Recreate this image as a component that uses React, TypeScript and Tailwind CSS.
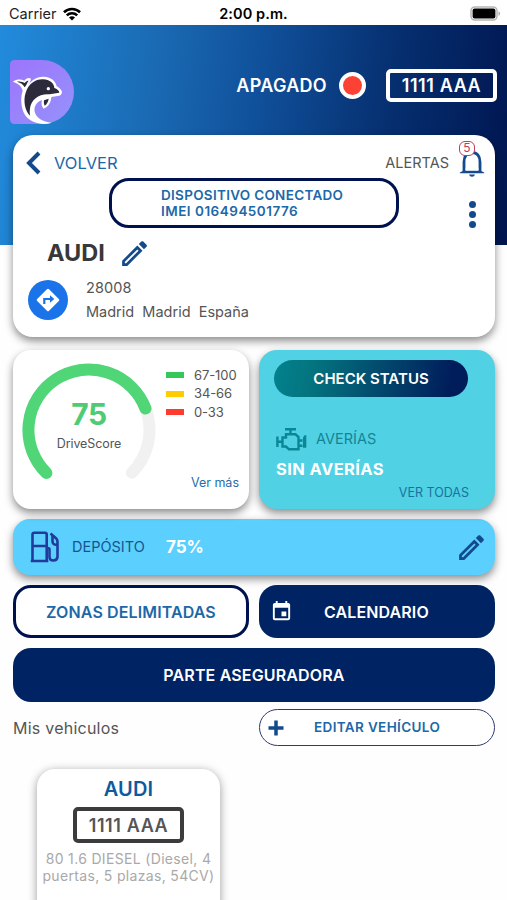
import React from "react";
import { MdOutlineEdit, MdEvent } from "react-icons/md";

function Wifi() {
  return (
    <svg width="18" height="14" viewBox="0 0 19 14" fill="none" stroke="#000" strokeWidth="2.700">
      <path d="M1 5.200C5.800.600 13.200.600 18 5.200" />
      <path d="M4 8.400c3.100-3 7.900-3 11 0" />
      <path d="M9.500 13.800 L6.300 10.600 C8.100 9 10.900 9 12.700 10.600 Z" fill="#000" stroke="none" />
    </svg>
  );
}

function Battery() {
  return (
    <svg width="31" height="15" viewBox="0 0 31 15">
      <rect x="1" y="1" width="26" height="13" rx="3.800" fill="#fff" stroke="#b5b5b1" strokeWidth="1.500" />
      <rect x="2.600" y="2.600" width="22.800" height="9.800" rx="2" fill="#000" />
      <path d="M28.500 5.200c2 .8 2 3.800 0 4.600z" fill="#a9a9a9" />
    </svg>
  );
}

function Logo() {
  return (
    <svg width="64" height="64" viewBox="17 15 192 192">
      <defs>
        <linearGradient id="violet" x1="0" y1="0" x2="1" y2="1">
          <stop offset="0" stopColor="#9d75fb" />
          <stop offset="1" stopColor="#9592fb" />
        </linearGradient>
      </defs>
      <path d="M31 15H113A96 96 0 0 1 113 207H31Q17 207 17 193V29Q17 15 31 15Z" fill="url(#violet)" />
      <path d="M26 80C40 70 52 74 60 77C66 68 74 67 80 71C79 80 74 86 71 92C82 75 97 64 118 65C142 66 154 79 157 94C164 98 172 104 173 111C172 119 168 123 160 123L141 126C140 142 133 155 118 161C110 153 111 143 113 135C98 140 88 154 91 170C96 188 114 201 143 203C113 213 77 203 62 180C49 160 48 128 55 107C51 91 40 86 26 80Z" fill="#fff" />
      <path d="M38 80C48 78 56 81 61 84C65 78 69 77 73 77C67 84 67 91 61 97C57 88 49 83 38 80Z" fill="#2c2b3b" />
      <path d="M77 182C62 168 56 137 64 113C73 87 91 73 115 73C138 74 149 85 150 99C158 102 165 107 165 113L136 118C105 115 80 134 77 160Q75 172 77 182Z" fill="#2c2b3b" />
      <path d="M119 136L133 131Q131 145 121 152Q117 145 119 136Z" fill="#2c2b3b" />
      <circle cx="132" cy="101" r="5" fill="#fff" />
    </svg>
  );
}

function Bell() {
  return (
    <svg width="26" height="28" viewBox="0 0 26 28">
      <path d="M5 23V13C5 7 8 3.500 13 3.500S21 7 21 13V23" fill="none" stroke="#124a8b" strokeWidth="2.800" />
      <path d="M.8 23.500Q4 22.500 5 20.500H21Q22 22.500 25.200 23.500V24.300H.8Z" fill="#124a8b" />
      <path d="M6.400 19.500H19.600V21.800H6.400Z" fill="#fff" />
      <path d="M10 25.600H16Q15.500 27.800 13 27.800T10 25.600Z" fill="#124a8b" />
    </svg>
  );
}

function Directions() {
  return (
    <svg width="40" height="40" viewBox="0 0 40 40">
      <circle cx="20" cy="20" r="20" fill="#1a73e8" />
      <rect x="11.600" y="11.600" width="16.800" height="16.800" rx="1.500" fill="#fff" transform="rotate(45 20 20)" />
      <path d="M16.300 24V19H23" fill="none" stroke="#1a73e8" strokeWidth="2.200" />
      <path d="M22 15.300L26.300 19L22 22.700Z" fill="#1a73e8" />
    </svg>
  );
}

function Gauge() {
  return (
    <svg width="134" height="134" viewBox="0 0 134 134" fill="none" strokeWidth="12" strokeLinecap="round">
      <path d="M123.500 45.500A60.500 60.500 0 0 1 109.800 109.800" stroke="#f1f1f1" />
      <path d="M24.400 110A60.500 60.500 0 1 1 123.500 45.500" stroke="#50d577" />
    </svg>
  );
}

function Engine() {
  return (
    <svg width="31" height="24" viewBox="0 0 31 24" fill="none" stroke="#0a8796" strokeWidth="2.400">
      <path d="M9 2.200H20M14.500 2.200V7" />
      <path d="M1.400 9.500V20M1.400 14.700H6" />
      <path d="M10 7.300H19.500L22.500 10V22.300H13L10 19.500H6.500V10.500H10Z" />
      <path d="M22.500 13.500H26.500M22.500 18.800H26.500" />
      <path d="M27 10.500V20.800H30.300V8.200H28.500Z" fill="#0a8796" stroke="none" />
    </svg>
  );
}

function Fuel() {
  return (
    <svg width="29" height="32" viewBox="0 0 29 32" fill="none" stroke="#213a9b" strokeWidth="2.600" strokeLinejoin="round">
      <path d="M2.500 30V3.500Q2.500 1.800 4.200 1.800H15Q16.700 1.800 16.700 3.500V30" />
      <path d="M.8 30H18.300M2.500 15H16.700" />
      <path d="M16.700 17H17.500Q19.500 17 19.500 18.500V26Q19.500 29.500 23.300 29.500T27.500 26V10.500Q27.500 8.500 26 7.200L20.500 2.500" />
      <path d="M22.500 4.800V10.500Q23 14.500 27.500 13.500" />
    </svg>
  );
}

const ranges = [
  { label: "67-100", color: "bg-[#34c759]" },
  { label: "34-66", color: "bg-[#ffcc00]" },
  { label: "0-33", color: "bg-[#ff3b30]" },
];

export default function App() {
  return (
    <div className="h-[900px] w-[507px] overflow-hidden bg-[#fefefe] font-['Inter','Liberation_Sans',sans-serif] leading-none text-[#555]">
      <div className="grid h-[25px] grid-cols-3 items-center bg-white pt-[2px] text-[14.5px] text-black">
        <div className="flex items-center gap-[6px] pl-[9px]">
          <span className="pt-[1px] text-[#222]">Carrier</span>
          <Wifi />
        </div>
        <span className="pt-[1px] text-center font-semibold tracking-[0.1px]">2:00 p.m.</span>
        <div className="flex justify-end pr-[6px]"><Battery /></div>
      </div>

      <div className="bg-[linear-gradient(97deg,#228bdc_0%,#1a6ab3_30%,#10509a_50%,#062f70_75%,#001550_100%)] bg-[length:100%_220px] bg-no-repeat pl-[13px] pr-[12px]">
        <header className="-ml-[3px] -mr-[2px] flex h-[110px] items-center pt-[11px]">
          <div className="mt-[12px]"><Logo /></div>
          <span className="ml-auto pt-[1px] text-[18px] font-semibold tracking-[0.3px] text-white">APAGADO</span>
          <div className="ml-[12px] size-[27px] rounded-full border-[4px] border-white bg-[#fb4234]" />
          <div className="ml-[20px] flex h-[33px] w-[111px] items-center justify-center rounded-[5px] border-[4px] border-white pt-[1px] text-[18px] font-semibold tracking-[0.6px] text-white">1111 AAA</div>
        </header>

        <section className="h-[202px] rounded-[20px] bg-white shadow-[0_4px_9px_rgba(0,0,0,0.45)]">
          <div className="flex h-[43px] items-center pl-[13px] pr-[10px] pt-[12px]">
            <svg width="15" height="24" viewBox="0 0 15 24" fill="none" stroke="#124a8b" strokeWidth="4"><path d="M13 2L3 12L13 22" /></svg>
            <span className="ml-[13px] pt-[1px] text-[16.5px] text-[#1d66a8]">VOLVER</span>
            <span className="ml-auto pt-[1px] text-[14.5px]">ALERTAS</span>
            <div className="relative ml-[10px] flex">
              <Bell />
              <span className="absolute -top-[8px] left-0 flex h-[15px] w-[16px] items-center justify-center rounded-[6px] border border-[#c43b60] bg-white text-[12px] text-[#c43b60]">5</span>
            </div>
          </div>
          <div className="flex items-start pl-[96px]">
            <div className="h-[50px] w-[290px] rounded-[20px] border-[3px] border-[#00114f] pl-[49px] pt-[6px] text-[13.5px] font-semibold leading-[16px] tracking-[0.3px] text-[#1d68a8]">
              DISPOSITIVO CONECTADO<br /><span className="tracking-[0.5px]">IMEI 016494501776</span>
            </div>
            <div className="ml-[70px] mt-[23px] flex flex-col gap-[3px]">
              {[0, 1, 2].map((i) => <i key={i} className="size-[7px] rounded-full bg-[#124a8b]" />)}
            </div>
          </div>
          <div className="mt-[8px] flex h-[34px] items-center pl-[34px]">
            <span className="w-[71px] text-[23.5px] font-bold text-[#383838]">AUDI</span>
            <MdOutlineEdit className="size-[33px] text-[#124a8b]" />
          </div>
          <div className="mt-[10px] flex pl-[15px]">
            <Directions />
            <div className="-mt-[2px] ml-[18px] whitespace-pre text-[14.5px] leading-[25px]">
              <div className="-mt-[3px] tracking-[0.1px]">28008</div>
              <div className="-mt-[1px]">Madrid  Madrid  España</div>
            </div>
          </div>
        </section>
      </div>

      <main className="pl-[13px] pr-[12px] pt-[13px]">
        <div className="flex gap-[10px]">
          <section className="flex h-[159px] w-[236px] rounded-[18px] bg-white pl-[9px] pt-[13px] shadow-[0_4px_9px_rgba(0,0,0,0.45)]">
            <div className="relative h-[134px] w-[134px]">
              <Gauge />
              <div className="absolute inset-0 flex flex-col items-center pt-[36px]">
                <b className="text-[30px] font-bold tracking-[-0.5px] text-[#50cb75]">75</b>
                <span className="mt-[9px] text-[12.5px] tracking-[-0.1px]">DriveScore</span>
              </div>
            </div>
            <div className="ml-[10px] flex flex-1 flex-col pt-[3px] text-[13px]">
              {ranges.map((r) => (
                <div key={r.label} className="flex h-[18.500px] items-center gap-[10px]">
                  <i className={"h-[6px] w-[18px] " + r.color} />
                  <span className="tracking-[-0.1px]">{r.label}</span>
                </div>
              ))}
              <span className="mt-[55px] pr-[10px] text-right text-[12.500px] text-[#286cac]">Ver más</span>
            </div>
          </section>

          <section className="h-[159px] w-[236px] rounded-[18px] bg-[#50d1e4] pl-[15px] pt-[10px] shadow-[0_4px_9px_rgba(0,0,0,0.45)]">
            <div className="flex h-[37px] w-[194px] items-center justify-center rounded-full bg-[linear-gradient(100deg,#02828e_0%,#04747f_20%,#001d5b_90%)] text-[15px] font-semibold text-white">CHECK STATUS</div>
            <div className="mt-[30px] flex h-[24px] items-center pl-[2px]">
              <Engine />
              <span className="ml-[9px] pt-[1px] text-[14.5px] text-[#168494]">AVERÍAS</span>
            </div>
            <div className="mt-[10px] pl-[2px] text-[16.500px] font-bold tracking-[0.4px] text-white">SIN AVERÍAS</div>
            <div className="mt-[9px] pr-[26px] text-right text-[12.500px] text-[#1a71a0]">VER TODAS</div>
          </section>
        </div>

        <section className="mt-[10px] flex h-[56px] items-center rounded-[17px] bg-[#5bcffd] pl-[17px] pr-[7px] shadow-[0_4px_9px_rgba(0,0,0,0.45)]">
          <Fuel />
          <span className="ml-[13px] w-[74px] whitespace-nowrap text-[14.500px] text-[#17548d]">DEPÓSITO</span>
          <span className="ml-[20px] pt-[1px] text-[17px] font-bold text-white">75%</span>
          <MdOutlineEdit className="ml-auto size-[33px] text-[#124a8b]" />
        </section>

        <div className="mt-[10px] flex gap-[10px] text-[16px] font-semibold tracking-[0.12px]">
          <button className="h-[53px] w-[236px] rounded-[18px] border-[3px] border-[#00114f] bg-white text-[#1d68a8]">ZONAS DELIMITADAS</button>
          <button className="flex h-[53px] w-[236px] items-center rounded-[18px] bg-[#002463] pl-[11px] text-white">
            <MdEvent className="size-[23px]" />
            <span className="ml-[31px]">CALENDARIO</span>
          </button>
        </div>
        <button className="mt-[10px] block h-[54px] w-[482px] rounded-[18px] bg-[#002463] text-[16px] font-semibold tracking-[0.15px] text-white">PARTE ASEGURADORA</button>

        <div className="mt-[7px] flex h-[37px] items-center">
          <span className="w-[246px] pt-[1px] text-[16px] tracking-[0.24px]">Mis vehiculos</span>
          <button className="flex h-[37px] w-[236px] items-center rounded-full border-[1.500px] border-[#303a70] bg-white pl-[8px] text-[13.500px] font-semibold tracking-[0.36px] text-[#1d68a8]">
            <svg width="16" height="16" viewBox="0 0 16 16" stroke="#124a8b" strokeWidth="3.500"><path d="M8 .5V15.500M.5 8H15.500" /></svg>
            <span className="ml-[30px] pt-[1px]">EDITAR VEHÍCULO</span>
          </button>
        </div>

        <section className="ml-[24px] mt-[23px] flex h-[160px] w-[183px] flex-col items-center rounded-[18px] bg-white pt-[10px] shadow-[0_2px_10px_rgba(0,0,0,0.4)]">
          <span className="text-[20px] font-semibold tracking-[0.2px] text-[#0c5b9f]">AUDI</span>
          <div className="mt-[8px] flex h-[36px] w-[111px] items-center justify-center rounded-[5px] border-[4px] border-[#3c3c3c] pt-[1px] text-[18px] font-semibold tracking-[0.6px] text-[#555]">1111 AAA</div>
          <p className="mt-[7px] whitespace-nowrap text-center text-[14px] leading-[17px] tracking-[0.33px] text-[#a9a9a9]">80 1.6 DIESEL (Diesel, 4<br />puertas, 5 plazas, 54CV)</p>
        </section>
      </main>
    </div>
  );
}
